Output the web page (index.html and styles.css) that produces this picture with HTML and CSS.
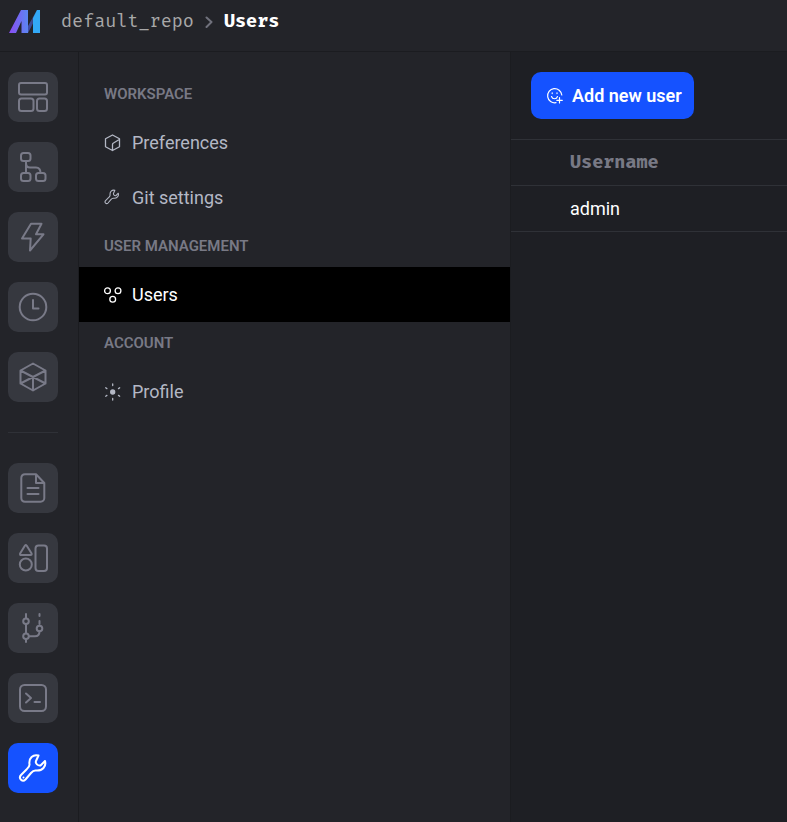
FILE: index.html
```html
<!DOCTYPE html>
<html lang="en">
<head>
<meta charset="utf-8">
<meta name="viewport" content="width=device-width, initial-scale=1">
<title>Users</title>
<link rel="stylesheet" href="styles.css">
</head>
<body>
<header class="topbar">
  <a class="logo" href="#" aria-label="Home">
    <svg width="32" height="24" viewBox="0 0 32 24">
      <defs>
        <linearGradient id="g1" x1="0" x2="1"><stop offset="0" stop-color="#8a4bf2"/><stop offset="1" stop-color="#5b86f0"/></linearGradient>
        <linearGradient id="g2" x1="0" x2="1"><stop offset="0" stop-color="#4a58c8"/><stop offset="1" stop-color="#2f4468"/></linearGradient>
      </defs>
      <path d="M19 23V16L28 0h3L19 23z" fill="url(#g2)" opacity=".8"/>
      <path d="M0 23 12 0h7v23h-6.500V11L7 23z" fill="url(#g1)"/>
      <path d="M24 8l4-8h3v23h-7z" fill="#32a9f7"/>
    </svg>
  </a>
  <nav class="crumbs" aria-label="Breadcrumb">
    <a href="#">default_repo</a>
    <svg class="chevron" width="8" height="12" viewBox="0 0 8 12"><path d="M1.500 1.500 6.500 6l-5 5"/></svg>
    <strong>Users</strong>
  </nav>
</header>
<div class="shell">
  <nav class="rail" aria-label="Main">
    <a class="tile" href="#" aria-label="Overview"><svg viewBox="0 0 30 30"><rect x="1" y="1" width="28" height="11.500" rx="2"/><rect x="1" y="16.500" width="14.500" height="12.500" rx="2.500"/><rect x="19" y="16.500" width="10" height="12.500" rx="2.500"/></svg></a>
    <a class="tile" href="#" aria-label="Pipelines"><svg viewBox="0 0 30 30"><rect x="3" y="1" width="9.500" height="8" rx="2.500"/><rect x="3" y="21" width="9.500" height="8" rx="2.500"/><rect x="18" y="21" width="9.500" height="8" rx="2.500"/><path d="M8 9v12M8 11c0 3 1.500 4.500 4 4.500h6c3 0 4.500 1.500 4.500 5.500"/></svg></a>
    <a class="tile" href="#" aria-label="Triggers"><svg viewBox="0 0 30 30"><path d="M13 1.700h10.500L18 12.300h7.500L12 28.500l.7-12H4z"/></svg></a>
    <a class="tile" href="#" aria-label="Pipeline runs"><svg viewBox="0 0 30 30"><circle cx="15" cy="15" r="13.300"/><path d="M15 8v8.500h5.500"/></svg></a>
    <a class="tile" href="#" aria-label="Global data products"><svg viewBox="0 0 30 30"><path d="M15 1.500 27.500 8.500v13L15 28.500l-12.500-7v-13zM2.500 8.500l25 13M27.500 8.500l-25 13M15 15v13.500"/></svg></a>
    <hr>
    <a class="tile" href="#" aria-label="Files"><svg viewBox="0 0 30 30"><path d="M7 1.200h11L26.300 10v15c0 2-1.500 3.800-3.800 3.800H7c-2.300 0-3.700-1.500-3.700-3.800V5C3.300 2.700 4.700 1.200 7 1.200zM18 1.500V10h8M9.500 15h11M9.500 21h11"/></svg></a>
    <a class="tile" href="#" aria-label="Templates"><svg viewBox="0 0 30 30"><path d="M7 2.500q.8-1 1.600 0l5 8q.4 1.500-1 1.500H3q-1.300 0-.9-1.500z"/><circle cx="7.800" cy="21.500" r="6"/><rect x="17.500" y="2.500" width="11.500" height="25.500" rx="3"/></svg></a>
    <a class="tile" href="#" aria-label="Version control"><svg viewBox="0 0 30 30"><path d="M8 1v4M8 11v9M8 26v3M21.500 1v2M21.500 8v3M11 23.200h6c3 0 4.500-1.500 4.500-5"/><circle cx="8" cy="8.300" r="2.800"/><circle cx="8" cy="23.200" r="2.800"/><circle cx="21.500" cy="15.500" r="2.800"/></svg></a>
    <a class="tile" href="#" aria-label="Terminal"><svg viewBox="0 0 30 30"><rect x="2" y="2" width="26" height="26" rx="4.500"/><path d="M8 10.500 13 15l-5 4.500M16.500 19h5.500"/></svg></a>
    <a class="tile active" href="#" aria-label="Settings" aria-current="page"><svg viewBox="0 0 30 30"><path id="wrench" d="M20.500 2.500C15 1 10.500 5 11.500 11.500 11.700 13.500 10 15 8.500 16.500L3 22c-3 3.500 1.500 7.500 4.500 4.500l5.500-6.500c1.500-1.800 3-2.800 5-2.500 6.500.5 10.500-4 9-9.500L22.500 12.500c-2.500.5-5.500-2-4.500-4.500z"/><path d="M5.500 24.500v.1"/></svg></a>
  </nav>
  <nav class="panel" aria-label="Settings">
    <h2>WORKSPACE</h2>
    <a class="item" href="#"><svg viewBox="0 0 18 18"><path d="M8.500 1 15.500 4.800v8l-7 3.700-7-3.700v-8zM8.500 16.500V10.500q0-1 1-1.500l5.800-3.500"/></svg>Preferences</a>
    <a class="item" href="#"><svg class="wrench" viewBox="0 0 34 34"><use href="#wrench"/></svg>Git settings</a>
    <h2>USER MANAGEMENT</h2>
    <a class="item active" href="#" aria-current="page"><svg viewBox="0 0 18 18"><circle cx="3.500" cy="4.800" r="2.900"/><circle cx="14" cy="4.800" r="2.900"/><circle cx="8.700" cy="13.300" r="2.900"/></svg>Users</a>
    <h2>ACCOUNT</h2>
    <a class="item" href="#"><svg viewBox="0 0 18 18"><circle cx="8.700" cy="9" r="2" fill="currentColor"/><path d="M8.700 1v1.500M8.700 15.500V17M1.700 4.800l1.200.8M14.500 12.400l1.200.8M1.700 13.200l1.200-.8M14.500 5.600l1.200-.8"/></svg>Profile</a>
  </nav>
  <main>
    <div class="toolbar">
      <button type="button"><svg viewBox="0 0 18 18"><path d="M15.800 8A7.100 7.100 0 1 0 10 15.700M5.500 9.500c1 3 5 3 6 0M6.200 5.800v.8M11 5.800v.8M13.500 10.500v5.500M10.800 13.300h5.500"/></svg>Add new user</button>
    </div>
    <table>
      <thead><tr><th scope="col">Username</th></tr></thead>
      <tbody><tr><td>admin</td></tr></tbody>
    </table>
  </main>
</div>
</body>
</html>
```
FILE: styles.css
```css
* {
  box-sizing: border-box;
}

body {
  display: flex;
  flex-direction: column;
  min-height: 100vh;
  margin: 0;
  background: #232429;
  color: #aeaeb8;
  font: 18px/24px Roboto, sans-serif;
}

a {
  color: inherit;
  text-decoration: none;
}

svg {
  flex: none;
  fill: none;
  stroke: currentColor;
  stroke-linecap: round;
  stroke-linejoin: round;
}

.topbar {
  display: flex;
  align-items: center;
  gap: 20px;
  height: 52px;
  padding: 0 9px 8px;
  border-bottom: 1px solid #1b1c20;
}

.logo svg {
  display: block;
  stroke: none;
}

.crumbs {
  display: flex;
  align-items: center;
  gap: 11px;
  color: #a8a8a8;
  font-family: "Fira Code", "DejaVu Sans Mono", monospace;
}

.crumbs strong {
  color: #fff;
}

.chevron {
  color: #70717c;
  stroke-width: 2;
}

.shell {
  display: grid;
  flex: 1;
  grid-template-columns: 79px 431px 1fr;
}

.rail {
  display: flex;
  flex-direction: column;
  gap: 20px;
  padding: 20px 20px 20px 8px;
  border-right: 1px solid #1b1c20;
}

.tile {
  display: grid;
  place-items: center;
  height: 50px;
  border-radius: 10px;
  background: #36383f;
  color: #797a88;
}

.tile svg {
  width: 30px;
  height: 30px;
  stroke-width: 2;
}

.tile.active {
  background: #1552ff;
  color: #fff;
}

.rail hr {
  width: 100%;
  margin: 10px 0;
  border: 0;
  border-top: 1px solid #2f3137;
}

.panel {
  padding-top: 21px;
}

.panel h2 {
  margin: 0;
  padding-left: 25px;
  color: #787985;
  font-size: 15px;
  font-weight: 600;
  line-height: 42px;
}

.item {
  display: flex;
  align-items: center;
  gap: 10px;
  height: 55px;
  padding: 0 25px;
  color: #b4b8c5;
}

.item svg {
  width: 18px;
  height: 18px;
  stroke-width: 1.3;
}

.item .wrench {
  stroke-width: 2;
}

.item.active {
  background: #000;
  color: #fff;
}

main {
  border-left: 1px solid #1b1c20;
  background: #1e1f24;
}

.toolbar {
  padding: 20px;
}

button {
  display: flex;
  align-items: center;
  gap: 8px;
  height: 47px;
  padding: 0 12px 0 15px;
  border: 0;
  border-radius: 10px;
  background: #1552ff;
  color: #fff;
  font: 600 18px/24px Roboto, sans-serif;
}

button svg {
  width: 18px;
  height: 18px;
  stroke-width: 1.2;
}

table {
  width: 100%;
  border-collapse: collapse;
}

th,
td {
  height: 46px;
  padding: 0 59px;
  border-top: 1px solid #2f3137;
  border-bottom: 1px solid #2f3137;
  color: #fff;
  text-align: left;
}

th {
  color: #787985;
  font-family: "Fira Code", "DejaVu Sans Mono", monospace;
}
```
